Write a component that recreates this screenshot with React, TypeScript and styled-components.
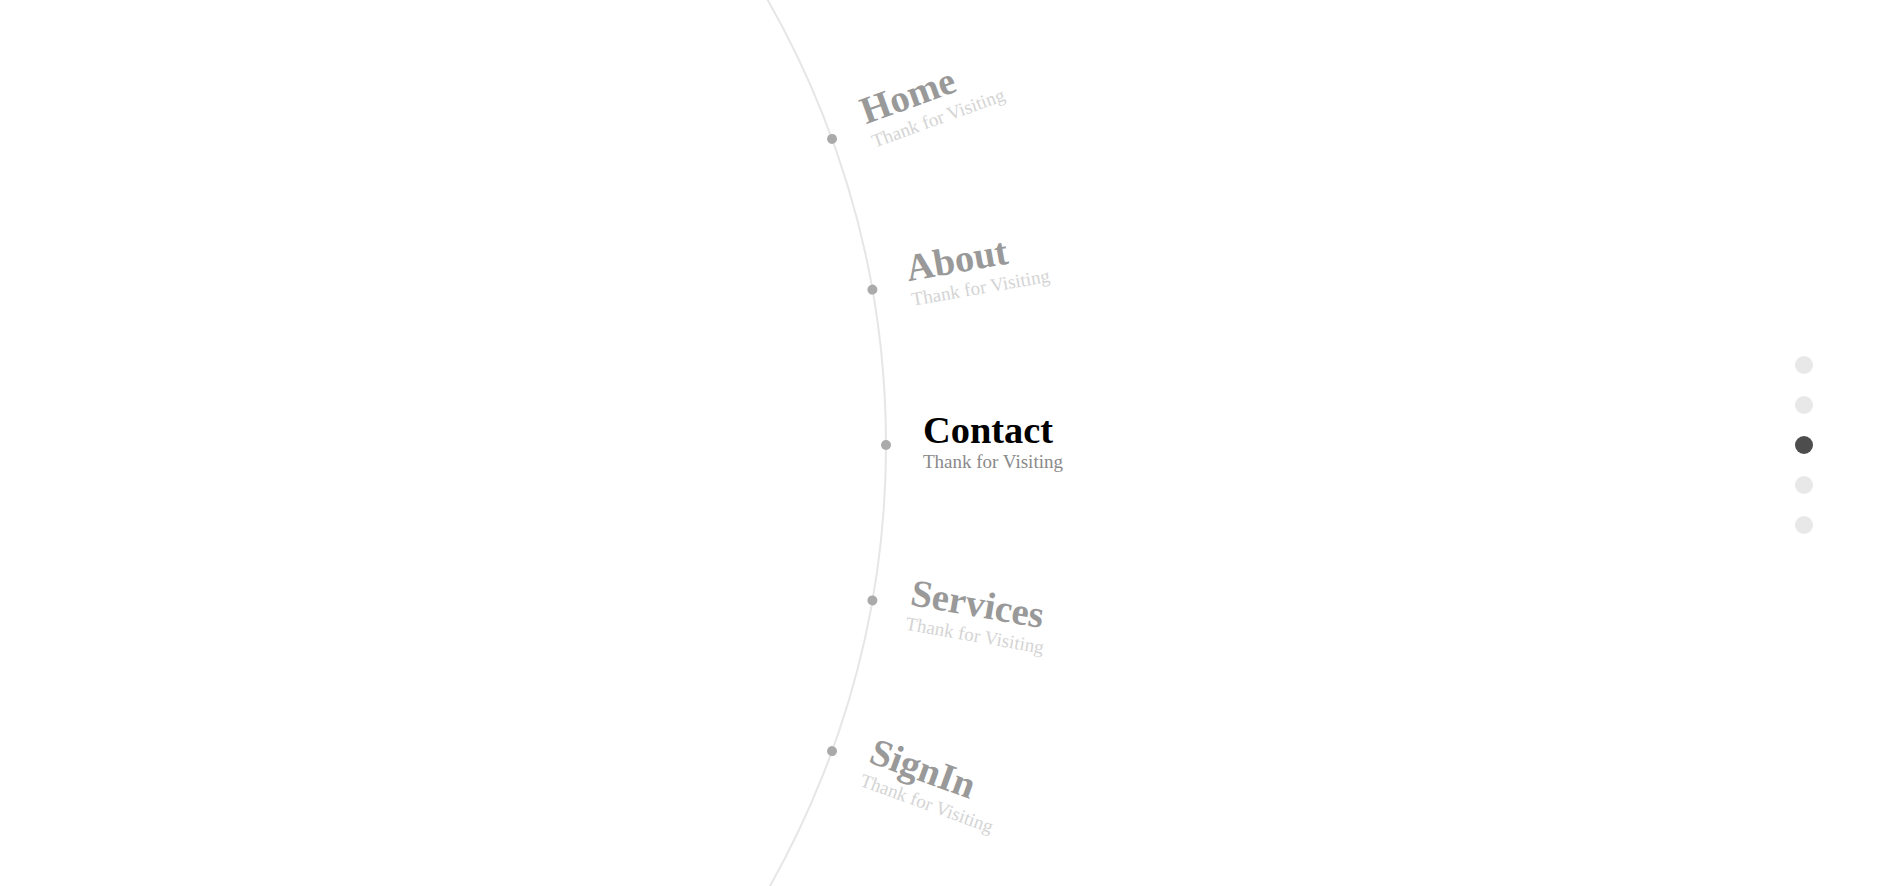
import React from "react";
import styled, { createGlobalStyle } from "styled-components";

const GlobalStyle = createGlobalStyle`
  html, body {
    margin: 0;
    padding: 0;
    background: #ffffff;
    overflow: hidden;
  }
  body {
    font-family: "Liberation Serif", "Times New Roman", serif;
  }
  #root {
    height: 100vh;
  }
`;

const RADIUS = 895;
const CENTER_X = -9;
const CENTER_Y = 444.5;

const Page = styled.div`
  display: flex;
  width: 100%;
  height: 100vh;
  overflow: hidden;
`;

const Stage = styled.nav`
  position: relative;
  flex: 1;
  height: 100%;
`;

const Ring = styled.div`
  position: absolute;
  left: ${CENTER_X - RADIUS - 1}px;
  top: ${CENTER_Y - RADIUS - 1}px;
  width: ${RADIUS * 2 + 2}px;
  height: ${RADIUS * 2 + 2}px;
  box-sizing: border-box;
  border: 2px solid #e6e6e6;
  border-radius: 50%;
`;

/* Each menu entry sits on the ring: the marker's centre is carried to the
   ring radius and the whole entry turns with its angle. */
const Item = styled.a<{ $angle: number }>`
  position: absolute;
  left: ${CENTER_X}px;
  top: ${CENTER_Y}px;
  display: flex;
  align-items: flex-start;
  gap: 32px;
  white-space: nowrap;
  transform-origin: 0 0;
  transform: rotate(${(p) => p.$angle}deg) translateX(${RADIUS}px)
    translate(-5px, -34px);
  text-decoration: none;
  cursor: pointer;
`;

const Marker = styled.span`
  flex: none;
  width: 10px;
  height: 10px;
  margin-top: 29px;
  border-radius: 50%;
  background: #aaaaaa;
`;

const Label = styled.span`
  display: flex;
  flex-direction: column;
`;

const Title = styled.span<{ $active: boolean }>`
  font-family: "Liberation Serif", "Times New Roman", serif;
  font-weight: 700;
  font-size: 38.4px;
  line-height: 1;
  margin-bottom: 2px;
  color: ${(p) => (p.$active ? "#000000" : "#999999")};
`;

const Subtitle = styled.span<{ $active: boolean }>`
  font-family: "Liberation Serif", "Times New Roman", serif;
  font-size: 19px;
  line-height: 1.2;
  color: ${(p) => (p.$active ? "#8a8a8a" : "#d4d4d4")};
`;

const Pager = styled.div`
  display: flex;
  flex-direction: column;
  justify-content: center;
  gap: 22px;
  padding-top: 3px;
  margin-right: 88px;
`;

const PagerDot = styled.span<{ $active: boolean }>`
  display: block;
  width: 18px;
  height: 18px;
  border-radius: 50%;
  background: ${(p) => (p.$active ? "#4d4d4d" : "#e8e8e8")};
`;

const items = [
  { title: "Home", angle: -20 },
  { title: "About", angle: -10 },
  { title: "Contact", angle: 0 },
  { title: "Services", angle: 10 },
  { title: "SignIn", angle: 20 },
];

const activeIndex = 2;

export default function App() {
  return (
    <>
      <GlobalStyle />
      <Page>
        <Stage>
          <Ring />
          {items.map((item, i) => (
            <Item key={item.title} $angle={item.angle}>
              <Marker />
              <Label>
                <Title $active={i === activeIndex}>{item.title}</Title>
                <Subtitle $active={i === activeIndex}>Thank for Visiting</Subtitle>
              </Label>
            </Item>
          ))}
        </Stage>
        <Pager>
          {items.map((item, i) => (
            <PagerDot key={item.title} $active={i === activeIndex} />
          ))}
        </Pager>
      </Page>
    </>
  );
}
